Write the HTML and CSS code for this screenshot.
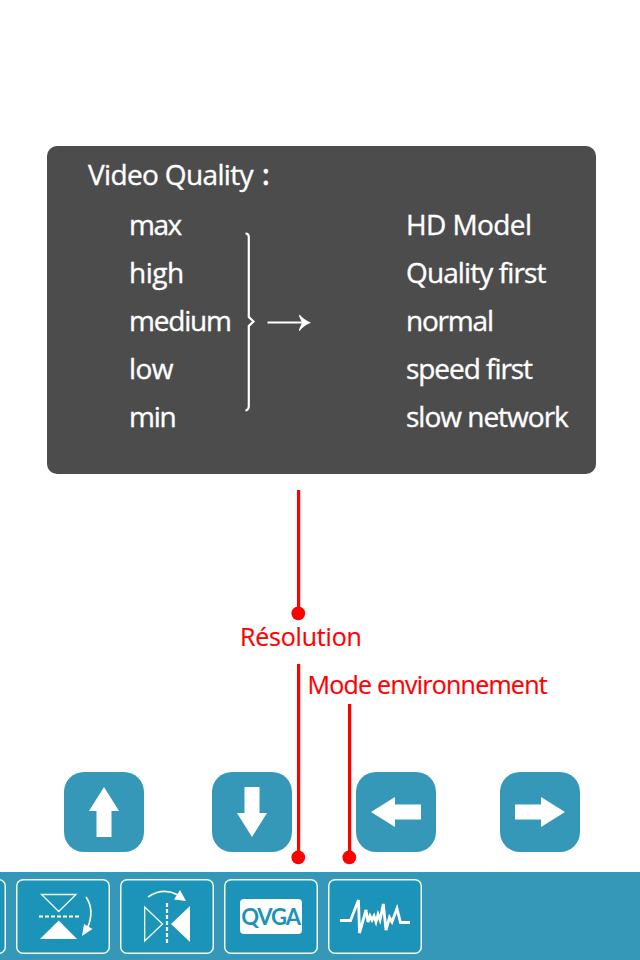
FILE: index.html
```html
<!DOCTYPE html>
<html lang="fr">
<head>
<meta charset="utf-8">
<title>Video Quality</title>
<link rel="stylesheet" href="styles.css">
</head>
<body>
<main class="screen">
  <section class="panel">
    <h1 class="panel-title">Video Quality<span class="colon">:</span></h1>
    <div class="mapping">
      <ul class="levels">
        <li><span class="max">max</span></li>
        <li><span class="high">high</span></li>
        <li><span class="medium">medium</span></li>
        <li><span class="low">low</span></li>
        <li><span class="min">min</span></li>
      </ul>
      <svg class="brace" width="80" height="240" viewBox="0 0 80 240">
        <path class="brace-line" d="M5.500 32.500Q8.800 32.500 8.800 36V116L13.500 120.500L8.800 125V205Q8.800 209 5.500 209.300"/>
        <path class="arrow-line" d="M27.500 121.500H66"/>
        <path class="arrow-tip" d="M59.500 113.500Q63.500 118.500 71 121.700Q63.500 124.500 59.500 130Q58.800 130 59 128.500L62 121.700L59 115Z"/>
      </svg>
      <ul class="modes">
        <li><span class="hd">HD Model</span></li>
        <li><span class="quality">Quality first</span></li>
        <li><span class="normal">normal</span></li>
        <li><span class="speed">speed first</span></li>
        <li><span class="slow">slow network</span></li>
      </ul>
    </div>
  </section>

  <div class="callout resolution">Résolution</div>
  <div class="callout environment">Mode environnement</div>

  <nav class="pad">
    <button class="key" aria-label="up"><svg width="80" height="80" viewBox="0 0 80 80"><path d="M40 15L55 39H47.500V65H32.500V39H25Z"/></svg></button>
    <button class="key" aria-label="down"><svg width="80" height="80" viewBox="0 0 80 80"><path d="M40 65L25 41H32.500V15H47.500V41H55Z"/></svg></button>
    <button class="key" aria-label="left"><svg width="80" height="80" viewBox="0 0 80 80"><path d="M15 40L39 25V32.500H65V47.500H39V55Z"/></svg></button>
    <button class="key" aria-label="right"><svg width="80" height="80" viewBox="0 0 80 80"><path d="M65 40L41 25V32.500H15V47.500H41V55Z"/></svg></button>
  </nav>

  <footer class="toolbar">
    <div class="tool"></div>
    <div class="tool">
      <svg width="94" height="75" viewBox="0 0 94 75">
        <path class="thin" d="M25.500 15.500H60L42.700 32.500Z"/>
        <path class="dash" d="M23 37.500H64"/>
        <path class="solid" d="M24 60L42.700 41.500L61 60Z"/>
        <path class="curve" d="M70 18Q79 31 71.500 49"/>
        <path class="solid" d="M66 57L68 45L76.500 50Z"/>
      </svg>
    </div>
    <div class="tool">
      <svg width="94" height="75" viewBox="0 0 94 75">
        <path class="thin" d="M24.700 28V62L42.500 45Z"/>
        <path class="dash" d="M47 24V65"/>
        <path class="solid" d="M70 27V63L51 45Z"/>
        <path class="curve" d="M28 18Q43 8 58 16"/>
        <path class="solid" d="M66 22L54 20.500L60 11Z"/>
      </svg>
    </div>
    <div class="tool"><span class="qvga">QVGA</span></div>
    <div class="tool">
      <svg width="94" height="75" viewBox="0 0 94 75">
        <path class="wave" d="M12 41.500H22.500L30.500 21L31.500 54L38 31L40 43L42 37L44 41L46 37L48 43L50 35.500L52 41L55.300 25L58 51L61.500 38.500L64 43L69 29.500L72.500 43.500H82"/>
      </svg>
    </div>
  </footer>

  <svg class="leaders" width="640" height="960" viewBox="0 0 640 960">
    <path d="M298.600 490V613M298.600 664V857M349.600 704V857"/>
    <circle cx="298.300" cy="613.300" r="6.900"/>
    <circle cx="298.300" cy="857.300" r="6.900"/>
    <circle cx="349.300" cy="857.300" r="6.900"/>
  </svg>
</main>
</body>
</html>
```
FILE: styles.css
```css
* {
  box-sizing: border-box;
}

body {
  margin: 0;
  background: #fff;
  font-family: "Open Sans", "Noto Sans", sans-serif;
}

.screen {
  position: relative;
  display: flex;
  flex-direction: column;
  width: 640px;
  height: 960px;
  padding-top: 146px;
  overflow: hidden;
}

.panel {
  width: 549px;
  height: 328px;
  margin-left: 47px;
  border-radius: 10px;
  background: #4c4c4c;
  color: #fff;
  font-size: 28px;
  -webkit-text-stroke: 0.35px #fff;
}

.panel-title {
  height: 55px;
  margin: 0;
  padding-left: 41px;
  font-size: 28px;
  font-weight: 400;
  line-height: 57px;
  letter-spacing: -0.65px;
}

.colon {
  margin-left: 9px;
  font-weight: 600;
}

.mapping {
  display: grid;
  grid-template-columns: 111px 166px 1fr;
  padding-left: 82px;
}

.levels,
.modes {
  margin: -1px 0 0;
  padding: 0;
  list-style: none;
}

.levels li,
.modes li {
  height: 48px;
  line-height: 48px;
  white-space: nowrap;
}

.max {
  letter-spacing: -1.5px;
}

.high {
  letter-spacing: -0.5px;
}

.medium,
.min,
.normal {
  letter-spacing: -1.2px;
}

.low {
  letter-spacing: -0.6px;
}

.hd {
  letter-spacing: -0.6px;
}

.quality {
  letter-spacing: -0.9px;
}

.speed {
  letter-spacing: -1.05px;
}

.slow {
  letter-spacing: -1px;
}

.brace {
  display: block;
}

.brace-line,
.arrow-line {
  fill: none;
  stroke: #fff;
  stroke-width: 2.2;
}

.arrow-tip {
  fill: #fff;
}

.callout {
  color: #f00;
  font-size: 25px;
  line-height: 34px;
  white-space: nowrap;
  -webkit-text-stroke: 0.2px #f00;
}

.resolution {
  margin: 145px 0 0 240px;
  letter-spacing: -0.2px;
}

.environment {
  margin: 14px 0 0 307.500px;
  letter-spacing: -0.75px;
}

.pad {
  display: grid;
  grid-template-columns: 148px 144px 144px 80px;
  margin: 71px 0 0 64px;
}

.key {
  width: 80px;
  height: 80px;
  padding: 0;
  border: 0;
  border-radius: 20px;
  background: #3698b8;
}

.key svg {
  display: block;
  fill: #fff;
}

.toolbar {
  display: flex;
  gap: 10px;
  height: 88px;
  margin-top: auto;
  padding-top: 7px;
  background: #3698b8;
}

.tool {
  display: flex;
  flex: none;
  align-items: center;
  justify-content: center;
  width: 94px;
  height: 75px;
  border-radius: 7px;
  background: #1c93b8;
  box-shadow: inset 0 0 0 1.5px #f4fbea;
}

.tool:first-child {
  margin-left: -88px;
}

.thin {
  fill: none;
  stroke: #f4fbea;
  stroke-width: 1.3;
}

.dash {
  fill: none;
  stroke: #fffff0;
  stroke-width: 2.2;
  stroke-dasharray: 4 2;
}

.solid {
  fill: #fff;
}

.curve {
  fill: none;
  stroke: #f4fbea;
  stroke-width: 1.7;
}

.wave {
  fill: none;
  stroke: #fffff5;
  stroke-width: 2.8;
}

.qvga {
  width: 62px;
  height: 35px;
  border-radius: 4px;
  background: #fff;
  color: #1c93b8;
  font-family: Lato, sans-serif;
  font-size: 22px;
  font-weight: 700;
  line-height: 35px;
  letter-spacing: -1.1px;
  text-indent: -1px;
  text-align: center;
}

.leaders {
  position: absolute;
  inset: 0;
  fill: #f00;
  pointer-events: none;
}

.leaders path {
  fill: none;
  stroke: #f00;
  stroke-width: 3.2;
}
```
